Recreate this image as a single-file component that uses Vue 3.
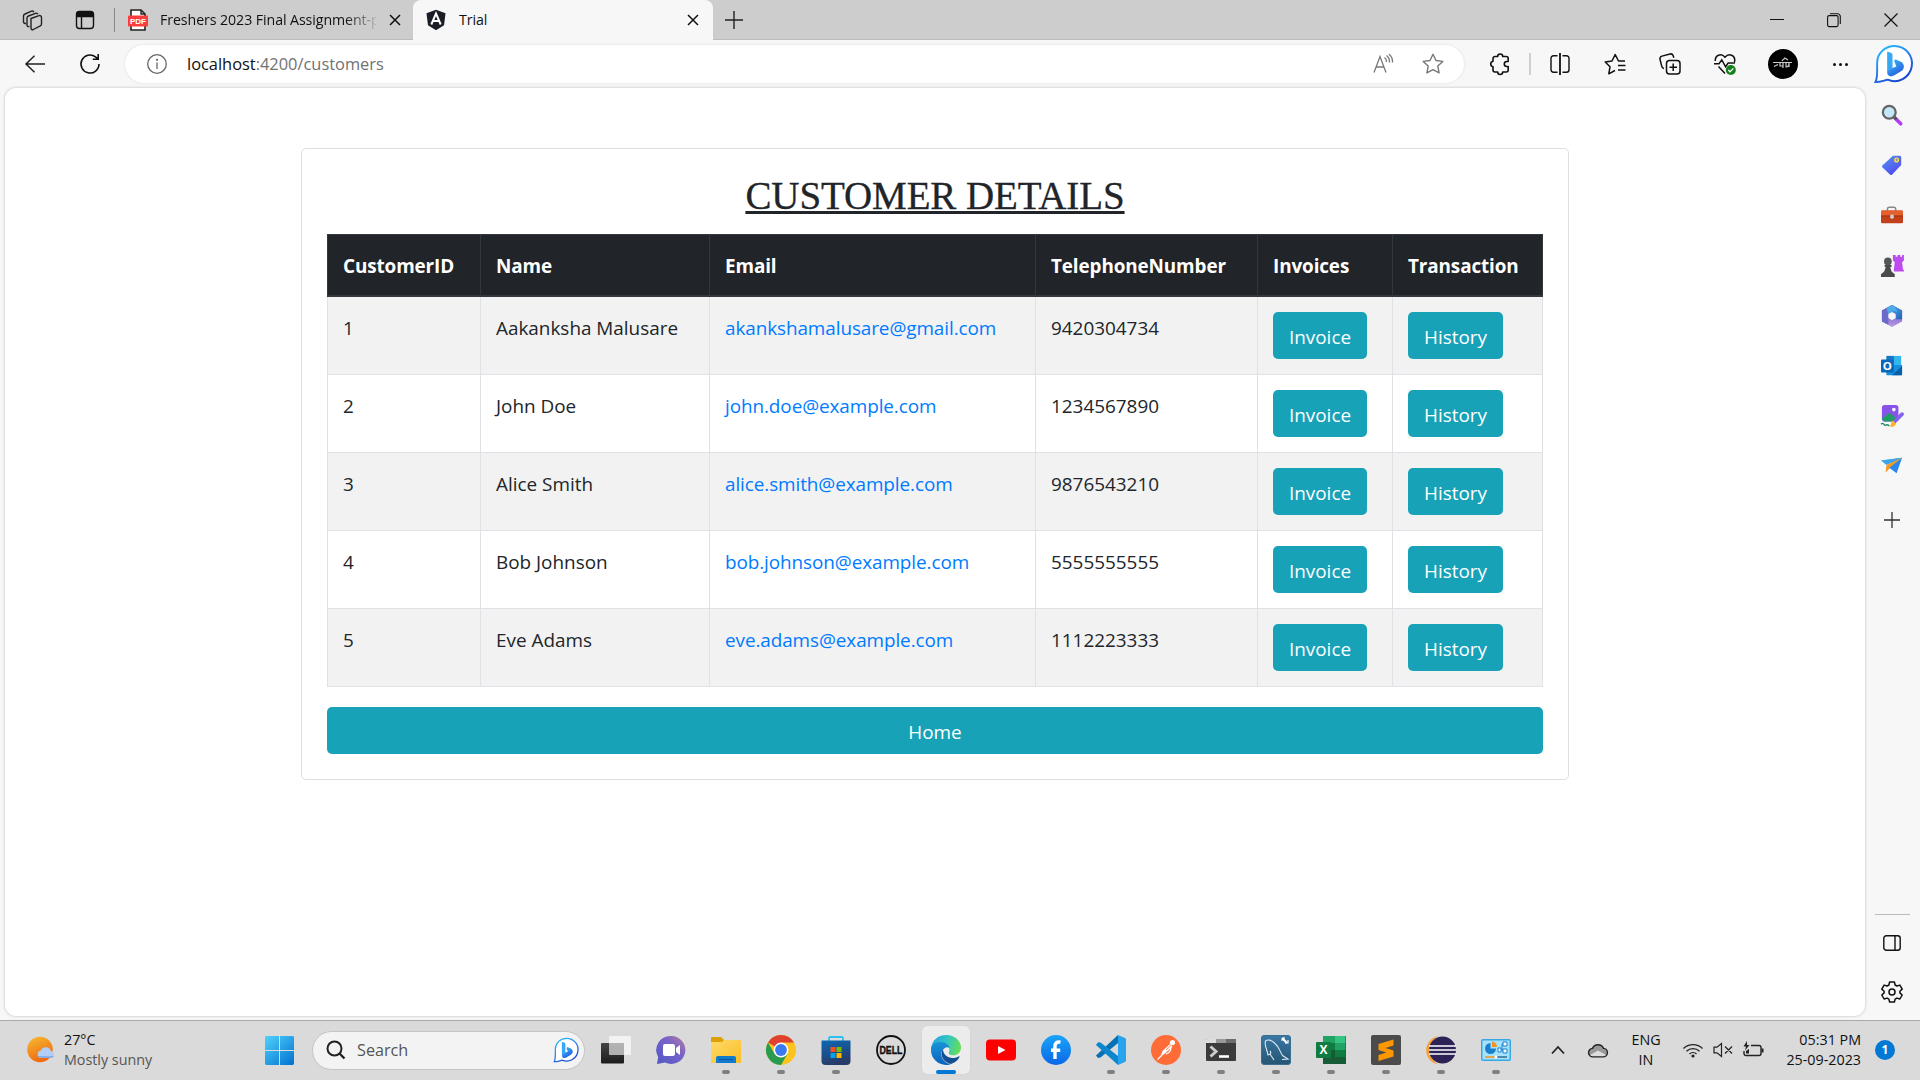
<script setup>
const customers = [
  { id: 1, name: 'Aakanksha Malusare', email: 'akankshamalusare@gmail.com', phone: '9420304734' },
  { id: 2, name: 'John Doe', email: 'john.doe@example.com', phone: '1234567890' },
  { id: 3, name: 'Alice Smith', email: 'alice.smith@example.com', phone: '9876543210' },
  { id: 4, name: 'Bob Johnson', email: 'bob.johnson@example.com', phone: '5555555555' },
  { id: 5, name: 'Eve Adams', email: 'eve.adams@example.com', phone: '1112223333' },
]

const bing = (id) => `<defs><linearGradient id="${id}a" x1="0" y1="0" x2=".6" y2="1"><stop offset="0" stop-color="#25c8ff"/><stop offset=".5" stop-color="#2a86f0"/><stop offset="1" stop-color="#1746d0"/></linearGradient><linearGradient id="${id}b" x1="0" y1="0" x2=".7" y2="1"><stop offset="0" stop-color="#3fc4fb"/><stop offset="1" stop-color="#2458e0"/></linearGradient></defs>
<path d="M21 2a18 18 0 1 1-7 34.600C10.500 37.200 7 39 1.500 39 3 36 3.200 33 3.200 28V19A17.800 17.500 0 0 1 21 2z" fill="#fff" stroke="url(#${id}a)" stroke-width="2"/>
<path d="M14.500 8l3.200 1.200q1.300.5 1.300 2V25l-5.500 3.500V8.800q0-1.200 1-.8z" fill="#36a8f5"/><path d="M13.500 28l5.500-3.500 4-1.500-2-4.500c-.7-2 .3-3 2-2.300l4.500 2c3 1.400 4.300 5.300 2 8.300-1 1.200-2 1.700-3 2.300l-6 3.600c-3.600 2-7 .3-7-3.400z" fill="url(#${id}b)"/>`

const sideIcons = [
  { y: 'search', svg: `<path d="M15 15l6.500 6.500" stroke="#b23cf5" stroke-width="4" stroke-linecap="round"/><path d="M14 14l3 3" stroke="#555" stroke-width="3"/><circle cx="9" cy="9" r="7" fill="#c4e6fa" stroke="#666" stroke-width="2.500"/>` },
  { y: 'tag', svg: `<defs><linearGradient id="tg" x1="0" y1="0" x2=".6" y2="1"><stop offset="0" stop-color="#5595ee"/><stop offset="1" stop-color="#504cf2"/></linearGradient></defs><path d="M13 2h7.500a1.500 1.500 0 0 1 1.500 1.500V12L12 22.500a1.500 1.500 0 0 1-2 0L1.500 14.500a1.500 1.500 0 0 1 0-2z" fill="url(#tg)"/><circle cx="17" cy="6.500" r="2" fill="#6c88d0" stroke="#ffd84a" stroke-width="1.600"/>` },
  { y: 'tools', svg: `<path d="M7 8V5.500a2 2 0 0 1 2-2h5a2 2 0 0 1 2 2V8" fill="none" stroke="#888" stroke-width="1.600"/><rect x="0" y="7" width="24" height="14" rx="1.500" fill="#c3411a"/><path d="M0 8.500A1.500 1.500 0 0 1 1.500 7h21A1.500 1.500 0 0 1 24 8.500V13H0z" fill="#e5602c"/><path d="M0 13h24" stroke="#9c2b08"/><rect x="10" y="11.500" width="4" height="4.500" rx="1.500" fill="#ccc"/>` },
  { y: 'games', svg: `<path d="M14 0h2v2h2V0h3v2h2V0h2v6l-2 2 1 8h1v2H14v-2l1-8-2-2V0z" fill="#bd4cf0"/><circle cx="7.500" cy="7" r="4.200" fill="#555"/><path d="M4 11h7.500v2H10l1.500 5 3.500 3v3H0v-3l3.500-3 1.700-5H4z" fill="#4b4b4b"/>` },
  { y: 'm365', svg: `<defs><linearGradient id="m1" x1="0" y1="0" x2="1" y2="1"><stop offset="0" stop-color="#57b9ef"/><stop offset="1" stop-color="#2060b8"/></linearGradient><linearGradient id="m2" x1="0" y1="0" x2="0" y2="1"><stop offset="0" stop-color="#544bb8"/><stop offset="1" stop-color="#b997e5"/></linearGradient></defs><path d="M12 0l11 6v12l-11 6-11-6V6z" fill="url(#m2)"/><path d="M12 0l11 6v9.500l-6.500 0V10L12 7.500l-4 2.300z" fill="url(#m1)"/><path d="M12 0L1 6v12l7 3.500V9.800l6-3.500V1z" fill="#6a6bc8"/><path d="M14 .9L12 0 6 3.300 8 9.800l6-3.500 4 1.500z" fill="#4cacea"/><path d="M12 7.500l4 2.300v4.500l-4 2.300-4-2.300V9.800z" fill="#f7f7f7"/>` },
  { y: 'outlook', svg: `<rect x="6" y="1" width="16" height="13" fill="#35b5ee"/><path d="M6 1h8v8H6z" fill="#1878c8"/><path d="M5 11h18v10a1 1 0 0 1-1 1H6z" fill="#1490df"/><path d="M12 22l11-10v9a1 1 0 0 1-1 1z" fill="#0a5ea8"/><rect x="0" y="5" width="14" height="14" rx="1" fill="#0a68ba"/><text x="7" y="16.400" font-family="Open Sans, sans-serif" font-size="12.500" font-weight="700" text-anchor="middle" fill="#fff">O</text>` },
  { y: 'designer', svg: `<rect x="1" y="0" width="18" height="18" rx="3" fill="#8753e8"/><circle cx="14" cy="5" r="2" fill="#fff"/><path d="M1 15l6-5c2-1.500 3-1 5 .5l4 4-3 3.500H3z" fill="#1f9d65"/><path d="M0 21c3-3 3 2 5 1s3 0 4 1" fill="none" stroke="#248d67" stroke-width="1.600"/><path d="M15 18l8-8" stroke="#8262ee" stroke-width="4" stroke-linecap="round"/><path d="M13 17l3.500 3.500c-1 3-4 4-7 3 2-1 1-5 3.500-6.500z" fill="#f8b62d"/>` },
  { y: 'drop', svg: `<path d="M0 6l23-3-9 6z" fill="#35a7ed"/><path d="M0 6l6 5L23 3z" fill="#3ca5ee"/><path d="M6 11l-1 8 4-4L23 3z" fill="#f39a1f"/><path d="M9 14L23 3l-6 17z" fill="#2987ea"/>` },
]

const taskIcons = [
  { name: 'taskview', svg: `<defs><linearGradient id="tv" x1="0" y1="0" x2="0" y2="1"><stop offset="0" stop-color="#444"/><stop offset="1" stop-color="#1c1c1c"/></linearGradient></defs><rect x="0" y="8" width="23" height="20.500" rx="1" fill="url(#tv)"/><rect x="8" y="1" width="22" height="19" rx="1" fill="#fafafa" opacity=".75"/><path d="M8 8h15v12H8z" fill="#999" opacity=".5"/>` },
  { name: 'chat', svg: `<defs><linearGradient id="ch" x1="1" y1="0" x2="0" y2="1"><stop offset="0" stop-color="#b87d9f"/><stop offset=".4" stop-color="#7862c9"/><stop offset="1" stop-color="#5157c5"/></linearGradient></defs><path d="M15 1a14.200 14 0 1 1-6 26.600L1 29l1.200-7A14.200 14 0 0 1 15 1z" fill="url(#ch)"/><rect x="7" y="9" width="12" height="12" rx="2" fill="#fff"/><path d="M20 13l4-3v10l-4-3z" fill="#fff"/>` },
  { name: 'explorer', run: true, svg: `<defs><linearGradient id="ex" x1="0" y1="0" x2="1" y2="1"><stop offset="0" stop-color="#ffd968"/><stop offset="1" stop-color="#f9bf27"/></linearGradient></defs><path d="M0 3a1 1 0 0 1 1-1h9l3 3v5H0z" fill="#dda005"/><path d="M0 7h11l2-2h16a1 1 0 0 1 1 1v21a1 1 0 0 1-1 1H1a1 1 0 0 1-1-1z" fill="url(#ex)"/><path d="M5 28v-5a2 2 0 0 1 2-2h16a2 2 0 0 1 2 2v5z" fill="#0f7bcd"/><path d="M8 24.500h14" stroke="#0a559c"/>` },
  { name: 'chrome', run: true, svg: `<circle cx="15" cy="15" r="15" fill="#fcc31e"/><path d="M15 15L2 7.500A15 15 0 0 1 28 7.500H15z" fill="#e0402f"/><path d="M2 7.500A15 15 0 0 0 15 30l6.500-11.200L15 15 8.500 18.800z" fill="#289c4c"/><circle cx="15" cy="15" r="7.400" fill="#fff"/><circle cx="15" cy="15" r="5.900" fill="#397af0"/>` },
  { name: 'store', run: true, svg: `<defs><linearGradient id="st" x1="0" y1="0" x2="0.300" y2="1"><stop offset="0" stop-color="#0d68b4"/><stop offset="1" stop-color="#273b69"/></linearGradient></defs><path d="M8 7V3a1 1 0 0 1 1-1h12a1 1 0 0 1 1 1v4" fill="none" stroke="#2fc0f3" stroke-width="1.800"/><path d="M.5 5.500h29V26a4 4 0 0 1-4 4h-21a4 4 0 0 1-4-4z" fill="url(#st)"/><path d="M9.500 12h5v5h-5z" fill="#f25022"/><path d="M15.500 12h5v5h-5z" fill="#7fba00"/><path d="M9.500 18h5v5h-5z" fill="#00a4ef"/><path d="M15.500 18h5v5h-5z" fill="#ffb900"/>` },
  { name: 'dell', svg: `<circle cx="15" cy="15" r="14" fill="none" stroke="#111" stroke-width="1.800"/><text x="15" y="19" font-family="Liberation Sans, sans-serif" font-size="11" font-weight="700" text-anchor="middle" textLength="23" lengthAdjust="spacingAndGlyphs" stroke="#111" stroke-width=".4" fill="#111">DELL</text>` },
  { name: 'edge', run: true, active: true, svg: `<defs><linearGradient id="e1" x1="0" y1=".3" x2="1" y2=".5"><stop offset="0" stop-color="#2a9fdd"/><stop offset=".5" stop-color="#31c6c4"/><stop offset="1" stop-color="#65de57"/></linearGradient><linearGradient id="e2" x1="0" y1="0" x2="0" y2="1"><stop offset="0" stop-color="#1794d8"/><stop offset="1" stop-color="#0d62bd"/></linearGradient></defs><path d="M0 14C1 5 7 0 15 0c9 0 15 6 15 12.500 0 5-4 8-8.500 8-4 0-5-1.500-4-3 1-2 .5-5-2.500-5.500z" fill="url(#e1)"/><path d="M0 15c0-5 4-8 9-8 6 0 9.500 3 9.500 6.500-5-2-9 2-8 7C11.500 26 16 29 20 29c-2 1-4 1-5 1A15 15 0 0 1 0 15z" fill="url(#e2)"/><path d="M12 14c-4 6 1 14 8 15 4-1.200 7-4 8.500-7 .3-.7-.3-1-.9-.6-7 3.600-15.600.6-15.600-7.400z" fill="#124e92"/><path d="M13 14.500c1-3 5-3 5.500-.5.300 1.500-1.500 3-.8 4.500.8 1.500 3.500 2 5.500 1.800-4 2.400-10.200-.3-10.200-5.800z" fill="#ececec"/>` },
  { name: 'youtube', svg: `<rect x="0" y="4.500" width="30" height="21" rx="4" fill="#f00"/><path d="M12 11l7.500 4-7.500 4z" fill="#fff"/>` },
  { name: 'facebook', svg: `<defs><linearGradient id="fb" x1="0" y1="0" x2="0" y2="1"><stop offset="0" stop-color="#19a5f8"/><stop offset="1" stop-color="#0a67e8"/></linearGradient></defs><circle cx="15" cy="15" r="15" fill="url(#fb)"/><path d="M19.500 7.200c-4-.7-5.500 1-5.500 4.300V24M10 15.200h9.200" fill="none" stroke="#fff" stroke-width="3.400"/>` },
  { name: 'vscode', run: true, svg: `<path d="M22 0v8L4.500 22.500 2 23 0 20.500z" fill="#0a70b5"/><path d="M2 7.200L4.500 7.500 22 21v9L0 10z" fill="#0c86cd"/><path d="M22 0l7 3a1.500 1.500 0 0 1 1 1.500v21a1.500 1.500 0 0 1-1 1.500l-7 3z" fill="#28a4ee"/>` },
  { name: 'postman', run: true, svg: `<circle cx="15" cy="15" r="15" fill="#ff6c37"/><circle cx="21.500" cy="7.500" r="2.600" fill="#fff"/><path d="M19 9l2.500 2.500-8 7.500-3.500 1 1.500-4z" fill="#fff"/><path d="M12 19l-5.500 5.500M20 12c0 4-2 6-5 7" fill="none" stroke="#fff" stroke-width="1.200"/><path d="M15 15l5-4.500" stroke="#ff6c37" stroke-width=".8"/>` },
  { name: 'terminal', run: true, svg: `<rect x="0" y="4" width="30" height="22" rx="1" fill="#3b3b3b"/><path d="M0 5a1 1 0 0 1 1-1h9v4H0z" fill="#ddd"/><path d="M10 4h10v4H10z" fill="#999"/><path d="M20 4h9a1 1 0 0 1 1 1v3H20z" fill="#6c6c6c"/><path d="M4.500 11.500l5.500 5-5.500 5" fill="none" stroke="#ccc" stroke-width="3"/><path d="M13 21.500h10" stroke="#fff" stroke-width="2.600"/>` },
  { name: 'mysql', run: true, svg: `<defs><linearGradient id="my" x1="0" y1="0" x2="0" y2="1"><stop offset="0" stop-color="#3a77a5"/><stop offset="1" stop-color="#245573"/></linearGradient></defs><rect x=".5" y=".5" width="29" height="29" rx="2.500" fill="url(#my)" stroke="#3a6f91"/><path d="M9 19l-2 1C6 14 3 10 4.500 6c2-2 6-1 9 2 5 4 5.500 9 8 12.500L27 24l-6 .5M9 19l4 6M9 19c1-1 1-2 0-3" fill="none" stroke="#dbe8f0" stroke-width="1.100"/><path d="M21 3l5 5" stroke="#fff" stroke-width="2.200"/><path d="M20 5h3V2M24 8h3V5" fill="none" stroke="#fff" stroke-width="1.200"/>` },
  { name: 'excel', run: true, svg: `<path d="M7 1h23v28H7z" fill="#185c37"/><path d="M7 1h12v7H7z" fill="#21a366"/><path d="M19 1h10.500v7H19z" fill="#33c481"/><path d="M7 8h12v7H7z" fill="#107c41"/><path d="M19 8h10.500v7H19z" fill="#21a366"/><path d="M19 15h10.500v7H19z" fill="#107c41"/><rect x="0" y="7" width="15" height="16" rx="1" fill="#107c41"/><text x="7.500" y="19.300" font-family="Open Sans, sans-serif" font-size="12" font-weight="700" text-anchor="middle" fill="#fff">X</text>` },
  { name: 'sublime', run: true, svg: `<rect x="0" y="0" width="30" height="30" rx="2" fill="#4b4b4b"/><path d="M22.500 4.500v6L14.500 13l8 2.500v6L7.500 26v-6l8-2.500-8-2.500V9z" fill="#ff9800"/>` },
  { name: 'eclipse', run: true, svg: `<path d="M12 1a14.500 14.500 0 0 0 0 28.500C3 24 3 6 12 1z" fill="#f7a13a"/><circle cx="16.500" cy="15" r="13.500" fill="#2c2255"/><path d="M3 11h27M3 15h27M3 19h27" stroke="#fff" stroke-width="1.700"/>` },
  { name: 'panel', run: true, svg: `<rect x=".75" y="4.750" width="28.500" height="20.500" rx="1" fill="#a6e2fb" stroke="#38a8e5" stroke-width="1.500"/><path d="M9.500 8a5.500 5.500 0 1 0 5.500 5.500H9.500z" fill="#1781cd"/><path d="M11 6.500a5.500 5.500 0 0 1 5 5.500h-5z" fill="#f59320"/><path d="M4 22h22" stroke="#f59320" stroke-width="1.500"/><path d="M15 22h11" stroke="#1781cd" stroke-width="1.500"/><circle cx="15" cy="22" r="1.500" fill="#fff"/><path d="M18 15h3V9h3M21 16h4" fill="none" stroke="#1781cd"/><path d="M22 7h4v4h-4zM22 14h4v4h-4zM17 13h3v4h-3z" fill="#fff" stroke="#1781cd"/>` },
]
</script>

<template>
  <div class="desktop">
    <header class="tabstrip">
      <svg class="ws" width="22" height="22" viewBox="0 0 22 22" fill="none" stroke="#222" stroke-width="1.400"><path d="M9 9.500l8-2.800a1.800 1.800 0 0 1 2.500 1.500V15a2 2 0 0 1-1.200 1.800l-7 3.700c-1 .5-2.300 0-2.300-1.200v-9.800z"/><path d="M7.500 17.500c-1.500.5-2.500-.2-2.500-1.500V9c0-1 .5-1.600 1.500-2l7-2.700c1-.4 2 0 2.300 1"/><path d="M4 14.500c-1.500 0-2.500-.5-2.500-1.800V7c0-1 .5-1.600 1.500-2l6.500-2.800c1-.4 2 0 2.300 1"/></svg>
      <svg class="vt" width="20" height="20" viewBox="0 0 20 20" fill="none" stroke="#111" stroke-width="1.400"><rect x="1.500" y="1.500" width="17" height="17" rx="3"/><path d="M2 3.500C2 2.500 2.500 2 4 2h12c1.500 0 2 .5 2 2v2.500H2z" fill="#111"/><path d="M6.500 7v11"/></svg>
      <i class="tabline"></i>
      <div class="tab idle">
        <svg width="20" height="22" viewBox="0 0 20 22"><path d="M3 1h10l4 4v16H3z" fill="#fff" stroke="#222" stroke-width="1.600"/><path d="M13 1v4h4" fill="none" stroke="#222" stroke-width="1.400"/><rect x="0" y="6.500" width="20" height="11" rx="1" fill="#fa3e3e"/><text x="10" y="15.200" font-family="Liberation Sans, sans-serif" font-weight="700" font-size="8" textLength="16" text-anchor="middle" fill="#fff">PDF</text></svg>
        <span class="tabtitle fade">Freshers 2023 Final Assignment-p</span>
        <svg class="x" width="12" height="12" viewBox="0 0 12 12" stroke="#111" stroke-width="1.500"><path d="M1 1l10 10M11 1L1 11"/></svg>
      </div>
      <div class="tab current">
        <svg width="20" height="22" viewBox="0 0 20 22"><path d="M10 .8l9.500 3.400-1.500 12L10 21.200l-8-5L.5 4.200z" fill="#1a1d26"/><path d="M5.300 15.500L10 4.500l4.700 11M7 12h6" fill="none" stroke="#fff" stroke-width="2"/></svg>
        <span class="tabtitle">Trial</span>
        <svg class="x" width="12" height="12" viewBox="0 0 12 12" stroke="#111" stroke-width="1.500"><path d="M1 1l10 10M11 1L1 11"/></svg>
      </div>
      <svg class="newtab" width="18" height="18" viewBox="0 0 18 18" stroke="#222" stroke-width="1.400"><path d="M9 0v18M0 9h18"/></svg>
      <div class="winctl">
        <svg width="14" height="14" viewBox="0 0 14 14" stroke="#111"><path d="M0 6.500h14"/></svg>
        <svg width="14" height="14" viewBox="0 0 14 14" fill="none" stroke="#111" stroke-width="1.100"><rect x=".6" y="2.600" width="10.500" height="11" rx="1.500"/><path d="M3 .8h7.500a2.800 2.800 0 0 1 2.800 2.800V11"/></svg>
        <svg width="14" height="14" viewBox="0 0 14 14" stroke="#111" stroke-width="1.200"><path d="M.5.5l13 13M13.500.5l-13 13"/></svg>
      </div>
    </header>

    <div class="toolbar">
      <svg class="back" width="20" height="18" viewBox="0 0 20 18" fill="none" stroke="#222" stroke-width="1.500"><path d="M9.500.8L1 9l8.500 8.200M1 9h19"/></svg>
      <svg class="reload" width="22" height="22" viewBox="0 0 22 22" fill="none" stroke="#111" stroke-width="1.600"><path d="M20 11a9 9 0 1 1-3.500-7.100L19 6M19.200 1v5.300h-5.400"/></svg>
      <div class="address">
        <svg width="20" height="20" viewBox="0 0 20 20" fill="none" stroke="#666" stroke-width="1.300"><circle cx="10" cy="10" r="9.300"/><path d="M10 8.500V15"/><circle cx="10" cy="5.800" r=".5" fill="#666"/></svg>
        <span class="url"><b>localhost</b>:4200/customers</span>
        <svg class="read" width="20" height="20" viewBox="0 0 20 20" fill="none" stroke="#777" stroke-width="1.300"><path d="M1 18.500L7 2.500l6 16M3 13h8M11.500 3.500c1.500 1 2 2.500 2 4.500M13.500 1.500c2.200 1.500 3.200 4 3 7M16 .3c2.500 2 3.700 5 3.500 8.200"/></svg>
        <svg width="22" height="22" viewBox="0 0 22 22" fill="none" stroke="#777" stroke-width="1.400" stroke-linejoin="round"><path d="M11 1.300l3 6.200 6.800.9-5 4.700 1.300 6.800-6.100-3.300-6.100 3.300 1.300-6.800-5-4.700 6.800-.9z"/></svg>
      </div>
      <div class="slot"><svg width="22" height="22" viewBox="0 0 22 22" fill="none" stroke="#111" stroke-width="1.600" stroke-linejoin="round"><path d="M8.700 3.500a2.500 2.500 0 0 1 5 0h3.500a2 2 0 0 1 2 2V8.500h-1.400a2.500 2.500 0 0 0 0 5h1.400v3.500a2 2 0 0 1-2 2h-3.500a2.500 2.500 0 0 1-5 0H6a2 2 0 0 1-2-2v-3.200a2.800 2.800 0 0 1 0-5.500V5.500a2 2 0 0 1 2-2z"/></svg></div>
      <i class="sep"></i>
      <div class="slot"><svg width="20" height="22" viewBox="0 0 20 22" fill="none" stroke="#111" stroke-width="1.400"><path d="M7.500 2.700H3.500A2.500 2.500 0 0 0 1 5.200v11.600a2.500 2.500 0 0 0 2.500 2.500h4M12.500 2.700h4A2.500 2.500 0 0 1 19 5.200v11.600a2.500 2.500 0 0 1-2.500 2.500h-4"/><path d="M10 0v22" stroke-width="1.800"/></svg></div>
      <div class="slot"><svg width="22" height="22" viewBox="0 0 22 22" fill="none" stroke="#111" stroke-width="1.500" stroke-linejoin="round"><path d="M21 8h-6.500l-3.300-6.500L8 8l-6.800 1 4.800 4.800-1.200 7L11 17.500M14 12.500h7.500M14 17h7.500"/></svg></div>
      <div class="slot"><svg width="22" height="22" viewBox="0 0 22 22" fill="none" stroke="#111" stroke-width="1.500"><rect x="7.500" y="7.500" width="13.500" height="13.500" rx="3"/><path d="M14.200 10.500v7.500M10.500 14.200H18M5 15.500c-1.300-.3-2-1-2.300-2.300L1 6.300C.7 4.700 1.300 3.600 3 3.100L11 1c1.700-.4 2.900.3 3.300 2l.5 1.800"/></svg></div>
      <div class="slot"><svg width="22" height="22" viewBox="0 0 22 22" fill="none" stroke="#111" stroke-width="1.500"><path d="M1.300 8C.8 2.500 7-.5 11 4.200 15-.5 21.300 2.500 20.700 8c-.1 1-.5 2-1 2.800M4.500 13.500l6.500 7M0 10.800h5l2.800-4 3.800 7 2.500-3.800h5"/><circle cx="16.800" cy="17" r="5" fill="#14801c" stroke="none"/><path d="M14.300 17l1.800 1.800 3.300-3.400" stroke="#fff" stroke-width="1.300"/></svg></div>
      <div class="slot avatar"><svg width="30" height="30" viewBox="0 0 30 30"><circle cx="15" cy="15" r="15" fill="#000"/><path d="M5 13.500h19M6 17.500l4-2M12 14v3h3v-3M15 17v2M18 14v4c2 0 3-1 3-4v4M14 12c1-2 3-2 3-3l3 2" fill="none" stroke="#ccc" stroke-width="1.200"/></svg></div>
      <div class="slot dots"><i></i><i></i><i></i></div>
      <svg class="bigbing" width="39" height="40" viewBox="0 0 40 41" v-html="bing('bg')"></svg>
    </div>

    <div class="body">
      <main class="page">
        <section class="card">
          <h2>CUSTOMER DETAILS</h2>
          <table>
            <colgroup><col class="c1"><col class="c2"><col class="c3"><col class="c4"><col class="c5"><col class="c6"></colgroup>
            <thead>
              <tr><th>CustomerID</th><th>Name</th><th>Email</th><th>TelephoneNumber</th><th>Invoices</th><th>Transaction</th></tr>
            </thead>
            <tbody>
              <tr v-for="c in customers" :key="c.id">
                <td>{{ c.id }}</td>
                <td>{{ c.name }}</td>
                <td><a>{{ c.email }}</a></td>
                <td>{{ c.phone }}</td>
                <td><button class="btn inv">Invoice</button></td>
                <td><button class="btn his">History</button></td>
              </tr>
            </tbody>
          </table>
          <button class="btn home">Home</button>
        </section>
      </main>
      <aside class="sidebar">
        <svg v-for="i in sideIcons" :key="i.y" width="22" height="22" viewBox="0 0 24 24" v-html="i.svg"></svg>
        <svg class="plus" width="16" height="16" viewBox="0 0 16 16" stroke="#333" stroke-width="1.300"><path d="M8 0v16M0 8h16"/></svg>
        <i class="rule"></i>
        <svg class="pane" width="18" height="16" viewBox="0 0 18 16" fill="none" stroke="#111" stroke-width="1.400"><rect x=".8" y=".8" width="16.400" height="14.400" rx="2.500"/><path d="M12 1v14"/></svg>
        <svg class="gear" width="22" height="22" viewBox="0 0 22 22" fill="none" stroke="#111" stroke-width="1.500" stroke-linejoin="round"><circle cx="11" cy="11" r="3"/><path d="M8.600 1h4.800l.7 3 1.800 1 3-.9 2.300 4-2.300 2.100v1.700l2.300 2.100-2.300 4-3-.9-1.800 1-.7 3H8.600l-.7-3-1.800-1-3 .9-2.300-4 2.300-2.100v-1.700L.8 8.100l2.300-4 3 .9 1.800-1z"/></svg>
      </aside>
    </div>

    <footer class="taskbar">
      <div class="weather">
        <svg width="28" height="28" viewBox="0 0 28 28"><defs><linearGradient id="sun" x1="0" y1="0" x2="0.400" y2="1"><stop offset="0" stop-color="#f5bd35"/><stop offset="1" stop-color="#f0690f"/></linearGradient></defs><circle cx="13" cy="13.500" r="12.800" fill="url(#sun)"/><path d="M14 22a3.800 3.800 0 0 1-.3-7.500 5.500 5.500 0 0 1 10.300.5 3.600 3.600 0 0 1 .3 7z" fill="#b3cdf5"/><path d="M11 20h16c-1 1.500-2 2-3 2H14c-1.500 0-2.500-.6-3-2z" fill="#89aee6"/></svg>
        <p><span>27°C</span><span class="dim">Mostly sunny</span></p>
      </div>
      <svg class="start" width="29" height="29" viewBox="0 0 29 29"><defs><linearGradient id="win" gradientUnits="userSpaceOnUse" x1="0" y1="0" x2="26" y2="29"><stop offset="0" stop-color="#4fd2fc"/><stop offset="1" stop-color="#0675d2"/></linearGradient></defs><path d="M1 0h13v14H0V1zM15 0h13l1 1v13H15zM0 15h14v14H1l-1-1zM15 15h14v13l-1 1H15z" fill="url(#win)"/></svg>
      <div class="search">
        <svg width="20" height="20" viewBox="0 0 20 20" fill="none" stroke="#222" stroke-width="2"><circle cx="8.500" cy="8.500" r="7"/><path d="M13.500 13.500l5 5" stroke-width="2.400"/></svg>
        <span>Search</span>
        <svg width="26" height="26" viewBox="0 0 40 41" v-html="bing('sb')"></svg>
      </div>
      <div class="apps">
        <div v-for="t in taskIcons" :key="t.name" class="app" :class="{ active: t.active }">
          <svg width="30" height="30" viewBox="0 0 30 30" v-html="t.svg"></svg>
          <i v-if="t.run"></i>
        </div>
      </div>
      <svg class="chev" width="14" height="10" viewBox="0 0 14 10" fill="none" stroke="#222" stroke-width="1.800"><path d="M1 8.500l6-6.500 6 6.500"/></svg>
      <svg class="cloud" width="20" height="15" viewBox="0 0 20 15"><path d="M5 13.800a4.200 4.200 0 0 1-.5-8.400 6 6 0 0 1 11 0 4.200 4.200 0 0 1-.5 8.400z" fill="#999" stroke="#222" stroke-width="1.400"/><path d="M2 12l8-4.500L18 12c-1 1-2 1.200-3 1.200H5c-1 0-2-.2-3-1.200z" fill="#ddd"/></svg>
      <p class="lang"><span>ENG</span><span>IN</span></p>
      <svg class="wifi" width="20" height="15" viewBox="0 0 20 15" fill="none" stroke="#222" stroke-width="1.300"><path d="M.5 5.500a13.500 13.500 0 0 1 19 0M3.500 8.300a9.300 9.300 0 0 1 13 0M6.500 11a5 5 0 0 1 7 0"/><circle cx="10" cy="13" r="1.600" fill="#222" stroke="none"/></svg>
      <svg class="mute" width="20" height="16" viewBox="0 0 20 16" fill="none" stroke="#222" stroke-width="1.200"><path d="M1 5.200h3L8.500 1.500v13L4 10.800H1zM12 4.500l7 7M19 4.500l-7 7"/></svg>
      <svg class="bat" width="21" height="18" viewBox="0 0 21 18" fill="none" stroke="#222" stroke-width="1.400"><path d="M8 4.500h8a2 2 0 0 1 2 2v6a2 2 0 0 1-2 2H3a2 2 0 0 1-2-2V10"/><path d="M4 0L.5 5.500H3l-1 4L6.500 4H4z" fill="#222" stroke="none"/><path d="M3 12.500V10l3-2v4.500z" fill="#222" stroke="none"/><path d="M19.500 7.500v4" stroke-width="2"/></svg>
      <p class="clock"><span>05:31 PM</span><span>25-09-2023</span></p>
      <b class="badge">1</b>
    </footer>
  </div>
</template>

<style>
html, body { margin: 0; overflow: hidden; }
</style>

<style scoped>
* { box-sizing: border-box; }
svg { display: block; flex: none; overflow: visible; }
.desktop { width: 1920px; height: 1080px; display: flex; flex-direction: column; background: #f7f7f7; font-family: "Open Sans", "Noto Sans", sans-serif; color: #111; }

.tabstrip { height: 40px; flex: none; display: flex; align-items: center; background: #cdcdcd; box-shadow: inset 0 -1px #bcbcbc; }
.ws { margin-left: 22px; }
.vt { margin-left: 31px; }
.tabline { width: 1px; height: 24px; margin-left: 19px; background: #888; }
.tab { height: 40px; display: flex; align-items: center; font-size: 14.200px; }
.idle { width: 298px; padding-left: 13px; }
.tabtitle { flex: none; width: 216px; margin-left: 12px; padding-bottom: 2px; white-space: nowrap; overflow: hidden; letter-spacing: -0.080px; }
.fade { -webkit-mask-image: linear-gradient(90deg, #000 185px, transparent 220px); mask-image: linear-gradient(90deg, #000 185px, transparent 220px); }
.x { margin-left: 13px; }
.current { width: 300px; padding-left: 13px; background: #f7f7f7; border-radius: 8px 8px 0 0; }
.current .x { margin-left: 12px; }
.current .tabtitle { margin-left: 13px; }
.newtab { margin-left: 12px; }
.winctl { margin-left: auto; margin-right: 22px; display: flex; gap: 43px; }

.toolbar { height: 48px; flex: none; display: flex; align-items: center; }
.back { margin-left: 25px; }
.reload { margin-left: 34px; }
.address { width: 1339px; height: 38px; margin-left: 24px; padding: 0 20px 0 22px; border-radius: 19px; background: #fff; box-shadow: 0 0 3px rgba(0, 0, 0, .1); display: flex; align-items: center; }
.url { margin-left: 20px; padding-bottom: 2px; font-size: 16.400px; color: #717171; }
.url b { font-weight: 400; color: #111; }
.read { margin-left: auto; margin-right: 29px; }
.slot { width: 55px; display: flex; justify-content: center; align-items: center; }
.address + .slot { margin-left: 8px; }
.sep { width: 2px; height: 22px; margin: 0 1px 0 2px; background: #d0d0d0; }
.avatar { width: 60px; margin-left: 1px; }
.dots { gap: 3px; }
.dots i { width: 3px; height: 3px; border-radius: 2px; background: #111; }
.bigbing { margin-left: 6px; }

.body { flex: 1; display: flex; padding: 0 0 4px 5px; min-height: 0; }
.page { width: 1860px; flex: none; background: #fff; border-radius: 11px; box-shadow: 0 0 3px rgba(0, 0, 0, .25); padding: 60px 0 0 296px; }
.card { width: 1268px; height: 632px; border: 1px solid #dfdfdf; border-radius: 5px; padding: 25px; font-size: 18.900px; line-height: 30px; color: #212529; display: flex; flex-direction: column; }
h2 { margin: -1px 0 15px; text-align: center; font: 400 39px/46px "Liberation Serif", serif; letter-spacing: -0.100px; -webkit-text-stroke: .3px #212529; text-decoration: underline; text-decoration-thickness: 3px; text-underline-offset: 2px; text-decoration-skip-ink: none; }
table { width: 1215px; border-collapse: collapse; table-layout: fixed; flex: none; }
.c1 { width: 153px; } .c2 { width: 229px; } .c3 { width: 326px; } .c4 { width: 222px; } .c5 { width: 135px; } .c6 { width: 150px; }
th { height: 61px; padding: 3px 0 0 15px; text-align: left; vertical-align: middle; font-weight: 700; background: #212529; color: #fff; border: 1px solid #32383e; border-bottom-width: 2px; letter-spacing: -0.120px; }
td { height: 78px; padding: 16px 15px 0; vertical-align: top; border: 1px solid #dee2e6; white-space: nowrap; }
tbody tr:first-child td { height: 79px; }
tbody tr:nth-child(odd) { background: #f2f2f2; }
a { color: #007bff; letter-spacing: -0.080px; }
.btn { display: block; height: 47px; border: 0; border-radius: 5px; padding: 3px 0 0; background: #17a2b8; color: #fff; font: inherit; text-align: center; }
td .btn { margin-top: -1px; }
.inv { width: 94px; }
.his { width: 95px; }
.btn.home { width: 1216px; margin-top: auto; }

.sidebar { flex: 1; display: flex; flex-direction: column; align-items: center; padding: 16px 1px 0 0; gap: 28.200px; }
.plus { margin-top: 6px; }
.rule { width: 35px; height: 1px; background: #bbb; margin-top: auto; }
.pane { margin-top: -8px; }
.gear { margin: 2px 0 13px; }

.taskbar { height: 60px; flex: none; display: flex; align-items: center; padding-bottom: 1px; background: #dadada; border-top: 1px solid #aaa; font-size: 14.300px; }
.taskbar p { margin: -1px 0 0; display: flex; flex-direction: column; line-height: 20px; white-space: nowrap; }
.weather { width: 238px; margin-left: 27px; display: flex; align-items: center; gap: 9px; }
.dim { color: #555; }
.search { width: 273px; height: 39px; margin-left: 18px; padding: 0 5px 0 13px; border-radius: 20px; background: #f3f3f3; border: 1px solid #c4c4c4; display: flex; align-items: center; font-size: 16.200px; color: #555; }
.search span { flex: 1; margin-left: 11px; }
.apps { display: flex; gap: 7px; margin-left: 7px; }
.app { position: relative; width: 48px; height: 48px; border-radius: 5px; display: flex; align-items: center; justify-content: center; }
.app i { position: absolute; bottom: 0; width: 8px; height: 4px; border-radius: 2px; background: #808080; }
.active { background: #ececec; box-shadow: 0 0 1px #bbb; }
.active i { width: 20px; background: #0078d4; }
.chev { margin-left: 31px; }
.cloud { margin-left: 23px; }
.taskbar .lang { width: 40px; margin-left: 18px; align-items: center; }
.wifi { margin-left: 17px; }
.mute { margin-left: 10px; }
.bat { margin-left: 10px; }
.taskbar .clock { width: 97px; align-items: flex-end; }
.badge { width: 20px; height: 20px; margin-left: 14px; border-radius: 50%; background: #0078d4; color: #fff; font-size: 12px; line-height: 20px; text-align: center; }
</style>
